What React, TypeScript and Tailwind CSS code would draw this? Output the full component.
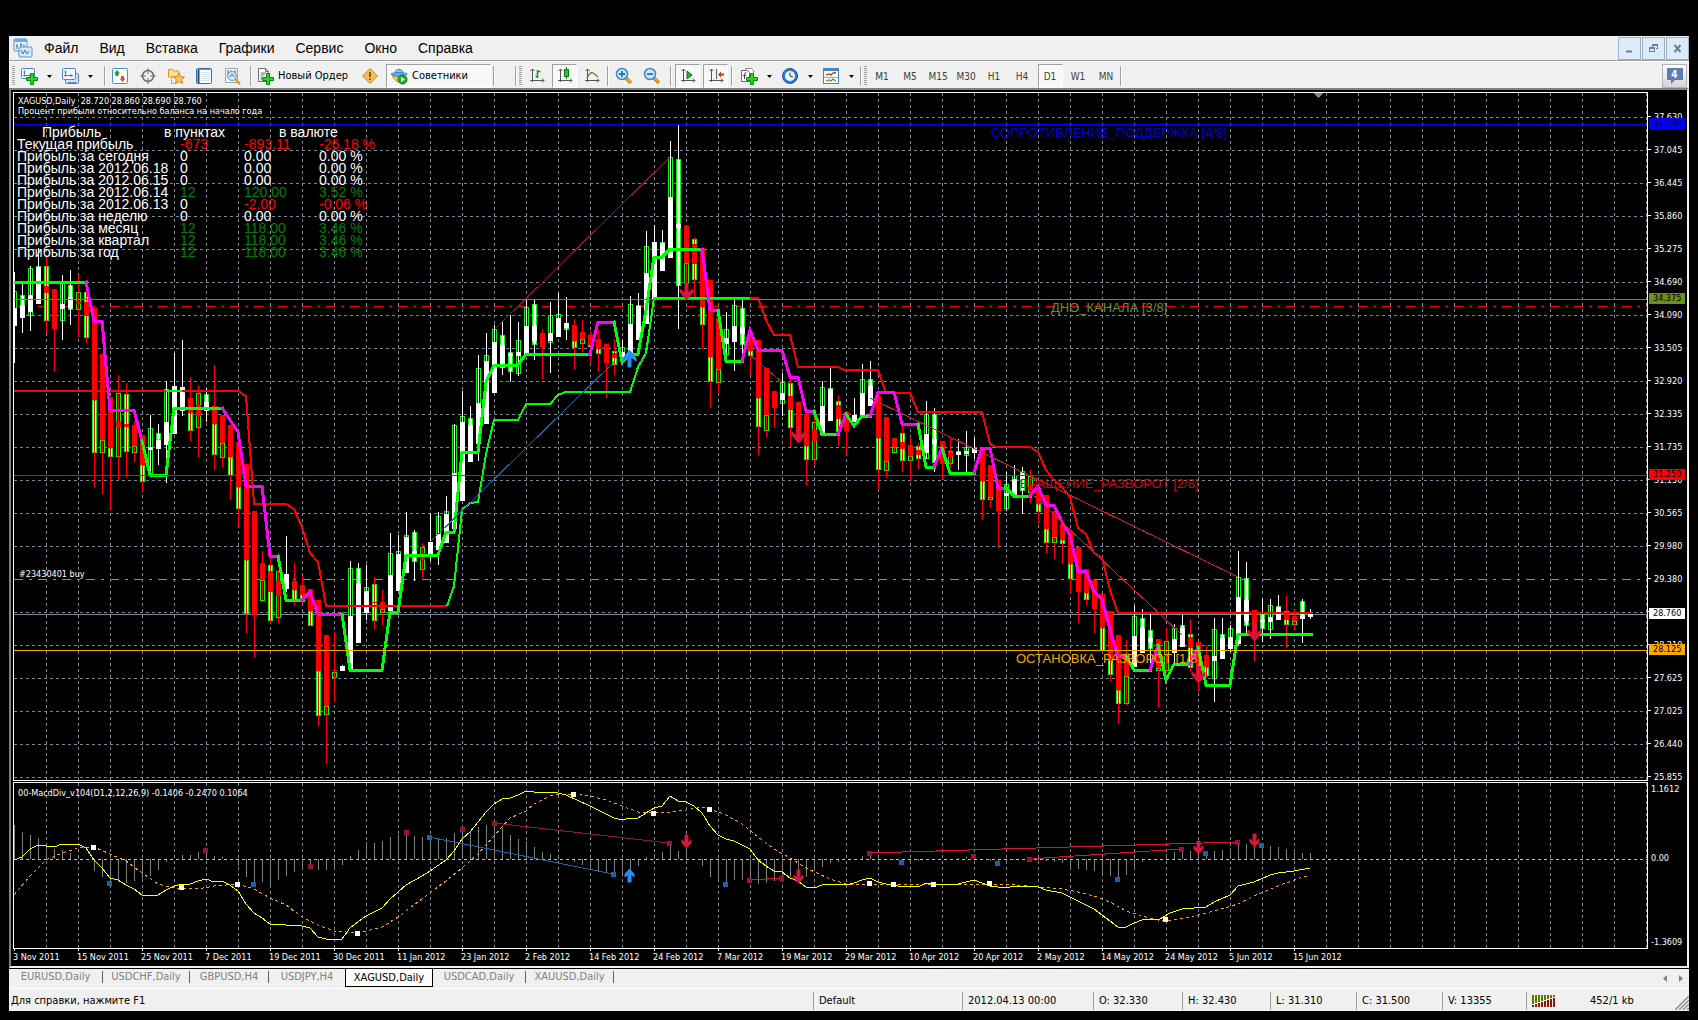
import React from "react";

type Point = [number, number];
// high, low, body top, body bottom, rising, outline top, outline bottom, outline filled
type Bar = [number, number, number, number, 0 | 1, number?, number?, (0 | 1)?];

const STEP = 8;
const FIRST_X = 14;

const BARS: Array<Bar> = [
  [272, 363, 308, 326, 1, 291, 308, 0], [283, 333, 305, 318, 1, 295, 305, 1],
  [266, 331, 295, 312, 1, 268, 315, 0], [248, 304, 267, 304, 1, 266, 267, 0],
  [258, 333, 286, 293, 0, 266, 320, 1], [289, 371, 289, 329, 0],
  [275, 340, 304, 309, 1, 283, 320, 0], [270, 325, 297, 308, 1, 285, 309, 1],
  [276, 337, 302, 304, 0, 292, 309, 0], [290, 343, 302, 316, 0, 292, 337, 1],
  [308, 487, 308, 400, 0, 400, 452, 1], [354, 494, 354, 440, 0, 440, 452, 0],
  [397, 509, 397, 448, 0, 448, 456, 1], [375, 480, 422, 427, 0, 393, 456, 0],
  [383, 477, 424, 427, 0, 394, 451, 1], [421, 462, 425, 446, 0, 446, 452, 0],
  [435, 492, 435, 465, 0, 465, 481, 1], [415, 473, 447, 450, 1, 428, 473, 0],
  [424, 465, 440, 449, 1, 433, 439, 1], [381, 483, 422, 445, 1, 389, 422, 0],
  [353, 434, 386, 434, 1], [340, 416, 387, 411, 1],
  [377, 441, 398, 413, 0, 413, 430, 1], [385, 457, 405, 416, 0, 393, 427, 0],
  [388, 422, 402, 411, 1, 394, 402, 1], [365, 470, 406, 424, 0, 424, 454, 1],
  [415, 467, 415, 443, 0, 443, 457, 0], [425, 500, 425, 457, 0, 457, 475, 1],
  [442, 527, 442, 487, 0, 487, 508, 1], [464, 633, 464, 560, 0, 560, 613, 1],
  [511, 657, 511, 615, 0], [551, 600, 563, 580, 0, 580, 600, 0],
  [558, 624, 571, 592, 0, 565, 620, 1], [570, 624, 581, 596, 0, 571, 617, 0],
  [536, 592, 574, 589, 1], [563, 605, 581, 590, 0, 590, 600, 1],
  [576, 603, 585, 595, 0, 595, 601, 1], [589, 626, 589, 611, 0, 611, 625, 1],
  [600, 726, 600, 671, 0, 671, 715, 1], [635, 764, 635, 706, 0, 706, 714, 0],
  [632, 702, 670, 671, 0, 672, 677, 0], [665, 671, 666, 671, 1],
  [561, 670, 616, 670, 1, 568, 616, 0], [563, 643, 583, 643, 1, 568, 583, 1],
  [565, 620, 591, 613, 1, 587, 591, 0], [577, 629, 602, 603, 0, 584, 620, 1],
  [590, 625, 602, 609, 0, 609, 612, 0], [533, 612, 575, 611, 1, 553, 575, 0],
  [535, 591, 554, 591, 1, 551, 554, 0], [512, 573, 537, 573, 1, 535, 537, 0],
  [530, 581, 551, 556, 1, 532, 561, 1], [543, 578, 553, 560, 0, 547, 569, 0],
  [513, 561, 542, 555, 1], [512, 565, 534, 550, 1, 516, 534, 0],
  [496, 543, 514, 543, 1, 511, 514, 0], [424, 529, 473, 529, 1, 425, 473, 0],
  [391, 501, 422, 501, 1, 416, 422, 0], [406, 462, 425, 462, 1, 418, 425, 1],
  [355, 461, 403, 444, 1, 368, 403, 0], [333, 424, 361, 424, 1, 355, 361, 0],
  [325, 393, 342, 393, 1, 329, 342, 0], [322, 375, 345, 368, 1, 335, 345, 1],
  [315, 382, 354, 356, 1, 352, 371, 1], [322, 376, 352, 356, 1, 340, 373, 0],
  [300, 355, 326, 355, 1, 307, 326, 0], [299, 360, 326, 341, 1, 304, 344, 1],
  [329, 379, 333, 348, 0], [302, 373, 333, 341, 1, 315, 342, 0],
  [293, 337, 318, 337, 1, 314, 318, 0], [297, 340, 323, 328, 1, 328, 329, 0],
  [319, 369, 325, 341, 0, 341, 347, 1], [320, 352, 332, 339, 0, 339, 343, 0],
  [331, 364, 335, 345, 0, 345, 346, 0], [330, 372, 339, 349, 0, 349, 353, 1],
  [344, 398, 344, 363, 0], [339, 375, 353, 358, 0, 351, 364, 1],
  [340, 360, 352, 358, 1, 347, 358, 0], [296, 358, 324, 358, 1, 304, 324, 0],
  [293, 340, 306, 340, 1, 305, 306, 0], [231, 324, 273, 324, 1, 246, 273, 0],
  [225, 300, 242, 300, 1], [230, 271, 243, 271, 1, 242, 243, 0],
  [141, 258, 197, 258, 1, 157, 197, 0], [125, 329, 224, 228, 1, 159, 285, 1],
  [226, 283, 226, 263, 0, 263, 283, 0], [237, 298, 244, 264, 0, 239, 279, 1],
  [248, 349, 248, 307, 0, 307, 324, 1], [280, 408, 280, 357, 0, 357, 381, 1],
  [318, 394, 318, 369, 0, 369, 382, 0], [312, 354, 338, 344, 1, 329, 354, 0],
  [300, 371, 326, 342, 1, 305, 326, 0], [299, 354, 327, 334, 1, 308, 344, 1],
  [333, 375, 333, 351, 0, 351, 355, 1], [340, 455, 340, 398, 0, 398, 426, 1],
  [368, 437, 368, 415, 0, 415, 430, 0], [391, 427, 391, 408, 0],
  [373, 416, 393, 400, 1, 382, 403, 0], [378, 447, 396, 410, 0, 383, 427, 1],
  [402, 435, 402, 435, 0], [414, 485, 414, 446, 0, 446, 459, 1],
  [416, 466, 430, 441, 0, 422, 459, 0], [381, 435, 406, 435, 1, 387, 406, 0],
  [368, 421, 389, 421, 1, 388, 389, 0], [395, 446, 405, 419, 0, 401, 431, 1],
  [412, 455, 412, 431, 0], [398, 422, 415, 422, 1],
  [364, 418, 393, 416, 1, 379, 393, 0], [361, 406, 386, 406, 1, 379, 386, 1],
  [396, 490, 396, 438, 0, 438, 469, 1], [417, 478, 417, 461, 0, 461, 470, 0],
  [438, 452, 438, 447, 0, 447, 452, 0], [425, 472, 442, 449, 0, 433, 460, 1],
  [437, 481, 445, 456, 0, 456, 460, 0], [443, 469, 450, 455, 0, 446, 458, 1],
  [401, 459, 434, 453, 1, 414, 458, 0], [408, 472, 439, 444, 1, 414, 462, 1],
  [441, 479, 441, 464, 0], [437, 468, 452, 457, 0, 451, 463, 0],
  [439, 470, 452, 455, 1, 451, 452, 0], [431, 472, 451, 454, 1, 447, 455, 0],
  [438, 459, 448, 453, 1], [450, 519, 450, 481, 0, 481, 499, 1],
  [465, 508, 465, 497, 0, 497, 499, 0], [480, 548, 480, 511, 0],
  [472, 511, 493, 496, 1, 484, 508, 0], [465, 495, 479, 495, 1, 475, 479, 0],
  [467, 514, 474, 480, 1, 471, 490, 1], [470, 503, 486, 490, 0, 476, 492, 0],
  [490, 524, 490, 504, 0, 504, 511, 1], [495, 553, 495, 529, 0, 529, 542, 1],
  [511, 559, 511, 537, 0, 537, 542, 0], [524, 564, 524, 540, 0, 540, 543, 1],
  [531, 594, 531, 564, 0, 564, 578, 1], [547, 623, 547, 592, 0],
  [569, 605, 569, 593, 0, 593, 599, 1], [580, 633, 580, 609, 0],
  [594, 652, 594, 628, 0, 628, 650, 1], [611, 681, 611, 660, 0, 660, 674, 1],
  [635, 724, 635, 690, 0, 690, 703, 1], [640, 705, 653, 676, 0, 676, 703, 0],
  [606, 667, 636, 667, 1, 616, 636, 0], [609, 653, 628, 653, 1, 618, 628, 1],
  [614, 665, 638, 642, 1, 630, 648, 1], [639, 708, 639, 668, 0, 668, 670, 0],
  [627, 673, 654, 656, 0, 641, 670, 0], [624, 665, 639, 653, 1, 628, 639, 0],
  [615, 647, 628, 647, 1, 625, 628, 1], [619, 672, 637, 648, 0, 634, 667, 1],
  [642, 692, 642, 675, 0], [645, 678, 655, 667, 0, 667, 675, 1],
  [618, 702, 656, 661, 1, 629, 678, 0], [618, 659, 638, 659, 1, 634, 638, 1],
  [625, 652, 637, 649, 1, 628, 637, 0], [551, 645, 597, 644, 1, 577, 597, 0],
  [562, 633, 600, 621, 1, 578, 625, 1], [610, 661, 610, 637, 0],
  [599, 642, 620, 622, 1, 614, 628, 1], [599, 639, 617, 622, 1, 605, 629, 0],
  [595, 620, 607, 620, 1, 606, 607, 0], [596, 648, 612, 620, 0, 611, 624, 1],
  [610, 629, 616, 621, 0, 621, 624, 0], [599, 643, 615, 619, 1, 601, 615, 1],
  [609, 619, 614, 617, 1],
];

// signed bar heights, one per candle
const HISTOGRAM = [
  34, 27, 24, 21, 14, 10, 9, 6, 2, 0, -12, -18, -24, -21, -24, -22, -22, -17, -11, -3, 0, 4, 4, 7,
  9, 3, 2, -1, -7, -18, -24, -23, -27, -21, -17, -13, -9, -7, -11, -11, -10, -6, 3, 9, 17, 16, 18,
  22, 24, 26, 23, 22, 21, 21, 21, 26, 29, 28, 32, 34, 35, 31, 24, 20, 18, 12, 7, 5, 1, 0, -3, -6,
  -10, -12, -13, -13, -15, -11, -7, 2, 5, 7, 14, 8, 11, 0, -7, -18, -22, -25, -21, -21, -23, -25,
  -24, -22, -20, -18, -22, -18, -12, -8, -4, -3, 0, 0, 3, 4, 1, 0, -1, -2, -3, -2, -1, 0, 0, 0, 1,
  2, 2, 0, -2, -4, -2, -1, 0, 0, -1, -2, -3, -4, -9, -10, -11, -12, -15, -17, -19, -16, -9, -3, 0,
  0, 5, 7, 8, 8, 7, 8, 8, 9, 11, 16, 15, 14, 13, 13, 12, 10, 9, 6, 6,
];

const TRAIL: Array<{ color: string; points: string }> = [
  { color: "#00ff00", points: "14,282 86,282" },
  { color: "#ff00ff", points: "86,282 94,321 102,321 110,410 134,410 142,441" },
  { color: "#00ff00", points: "142,441 150,475 166,475 174,408 222,408" },
  { color: "#ff00ff", points: "222,408 230,420 238,432 246,486 262,486 270,556 278,556" },
  { color: "#00ff00", points: "278,556 286,600 302,600" },
  { color: "#ff00ff", points: "302,600 310,592 318,614 342,614" },
  {
    color: "#00ff00",
    points:
      "342,614 350,670 382,670 390,612 398,612 406,555 438,555 446,532 454,532 462,452 478,452 486,382 494,365 518,365 526,354 590,354",
  },
  { color: "#ff00ff", points: "590,354 598,322 614,322" },
  {
    color: "#00ff00",
    points: "614,322 622,362 630,354 638,354 646,310 654,257 662,257 670,249 702,249",
  },
  { color: "#ff00ff", points: "702,249 710,310 718,310" },
  { color: "#00ff00", points: "718,310 726,361 742,361" },
  {
    color: "#ff00ff",
    points: "742,361 750,330 758,350 782,350 790,377 798,377 806,411 814,411",
  },
  { color: "#00ff00", points: "814,411 822,434 838,434" },
  { color: "#ff00ff", points: "838,434 846,414" },
  { color: "#00ff00", points: "846,414 854,426 862,416 870,416" },
  { color: "#ff00ff", points: "870,416 878,392 894,392 902,424 918,424" },
  { color: "#00ff00", points: "918,424 926,467 934,467" },
  { color: "#ff00ff", points: "934,467 942,448" },
  { color: "#00ff00", points: "942,448 950,473 974,473" },
  { color: "#ff00ff", points: "974,473 982,448 990,448 998,488 1006,488" },
  { color: "#00ff00", points: "1006,488 1014,496 1030,496" },
  {
    color: "#ff00ff",
    points:
      "1030,496 1038,486 1046,505 1054,505 1062,522 1070,535 1078,571 1086,571 1094,592 1102,599 1110,630 1118,656 1126,656",
  },
  { color: "#00ff00", points: "1126,656 1134,670 1150,670" },
  { color: "#ff00ff", points: "1150,670 1158,645" },
  { color: "#00ff00", points: "1158,645 1166,680 1174,664 1190,664" },
  { color: "#ff00ff", points: "1190,664 1198,647" },
  { color: "#00ff00", points: "1198,647 1206,685 1230,685 1238,634 1311,634" },
];

const CHANNEL: Array<{ color: string; points: string }> = [
  {
    color: "#ff0000",
    points:
      "14,391 238,391 246,396 254,504 286,504 294,509 302,527 310,553 318,562 326,606 447,606",
  },
  { color: "#00ff00", points: "166,391 182,391" },
  {
    color: "#00ff00",
    points:
      "447,606 454,586 462,510 470,503 478,502 486,454 494,420 518,420 526,404 550,404 558,395 566,392 630,392 638,367 646,353 654,298 750,298",
  },
  {
    color: "#ff0000",
    points:
      "750,298 758,298 766,320 774,335 790,335 798,367 838,367 844,370 878,370 886,393 910,393 918,412 982,412 990,444 996,447 1030,447 1038,452 1046,470 1054,480 1062,487 1070,497 1078,528 1086,534 1094,553 1102,558 1110,590 1118,613 1311,613",
  },
];

const MACD_LINE =
  "14,860 22,857 30,849 38,845 46,846 54,847 62,844 70,845 78,844 86,848 94,860 102,868 110,878 118,880 126,885 134,889 142,895 158,895 166,890 174,886 182,884 190,884 198,881 206,879 214,882 222,881 230,885 238,891 246,904 254,913 262,918 270,924 286,925 302,926 310,928 318,937 326,939 334,940 342,939 350,928 358,922 366,916 382,908 390,899 406,885 422,876 430,871 446,860 454,851 462,839 470,832 478,822 486,812 494,804 502,799 510,798 518,795 526,791 534,792 558,793 566,795 590,806 606,814 614,818 622,820 630,818 638,818 646,813 654,808 662,806 670,796 678,801 686,802 694,806 702,813 710,826 718,835 726,839 734,841 742,845 750,849 758,860 766,866 774,871 782,872 790,878 798,881 806,887 814,888 822,885 830,884 846,885 854,883 862,880 870,878 878,882 886,884 894,885 902,887 910,886 918,887 926,883 934,884 958,884 966,882 974,880 982,883 990,886 1006,888 1014,886 1030,886 1038,887 1046,890 1062,893 1078,901 1094,909 1110,921 1118,927 1126,927 1134,923 1142,920 1160,919 1170,913 1182,909 1206,907 1214,902 1230,895 1238,886 1254,882 1270,875 1278,873 1294,871 1310,868";

const SIGNAL_LINE =
  "14,895 30,876 46,860 62,853 78,848 94,847 110,854 126,861 142,873 158,884 174,888 198,889 214,886 238,884 254,889 270,898 286,905 302,917 318,925 334,931 358,933 366,931 382,927 398,917 414,905 430,893 446,881 462,868 478,854 494,836 510,818 526,811 534,804 550,796 558,794 574,794 590,796 606,800 622,806 638,812 654,813 670,812 686,810 702,807 710,809 726,815 742,824 758,837 774,849 790,858 806,868 830,879 846,884 870,884 910,885 1000,884 1030,886 1062,889 1078,892 1094,896 1110,902 1126,911 1142,916 1158,920 1174,920 1190,917 1214,911 1238,904 1254,896 1278,886 1294,880 1310,875";

const MARKS: Array<{ color: string; points: Array<Point> }> = [
  {
    color: "#ffffff",
    points: [
      [93, 847], [181, 887], [237, 884], [357, 933], [573, 794], [653, 813], [709, 809],
      [869, 883], [893, 884], [933, 884], [989, 883], [1165, 919],
    ],
  },
  {
    color: "#1565b4",
    points: [
      [109, 883], [253, 884], [429, 837], [613, 874], [725, 884], [901, 862], [997, 863],
      [1117, 879], [1205, 853], [1261, 845],
    ],
  },
  {
    color: "#9a1232",
    points: [
      [205, 850], [310, 866], [406, 832], [462, 829], [494, 823], [669, 843], [749, 880],
      [781, 878], [869, 853], [973, 856], [1029, 859], [1181, 849], [1237, 842],
    ],
  },
];

const PRICES = [
  "37.630", "37.045", "36.445", "35.860", "35.275", "34.690", "34.090", "33.505", "32.920",
  "32.335", "31.735", "31.150", "30.565", "29.980", "29.380", "28.795", "28.210", "27.625",
  "27.025", "26.440", "25.855",
];

const DATES = [
  "3 Nov 2011", "15 Nov 2011", "25 Nov 2011", "7 Dec 2011", "19 Dec 2011", "30 Dec 2011",
  "11 Jan 2012", "23 Jan 2012", "2 Feb 2012", "14 Feb 2012", "24 Feb 2012", "7 Mar 2012",
  "19 Mar 2012", "29 Mar 2012", "10 Apr 2012", "20 Apr 2012", "2 May 2012", "14 May 2012",
  "24 May 2012", "5 Jun 2012", "15 Jun 2012",
];

const PROFITS: Array<{ label: string; values: [string, string, string]; colors: [string, string, string] }> = [
  { label: "Текущая прибыль", values: ["-673", "-893.11", "-26.18 %"], colors: ["text-[#ff0000]", "text-[#ff0000]", "text-[#ff0000]"] },
  { label: "Прибыль за сегодня", values: ["0", "0.00", "0.00 %"], colors: ["text-white", "text-white", "text-white"] },
  { label: "Прибыль за 2012.06.18", values: ["0", "0.00", "0.00 %"], colors: ["text-white", "text-white", "text-white"] },
  { label: "Прибыль за 2012.06.15", values: ["0", "0.00", "0.00 %"], colors: ["text-white", "text-white", "text-white"] },
  { label: "Прибыль за 2012.06.14", values: ["12", "120.00", "3.52 %"], colors: ["text-[#008000]", "text-[#008000]", "text-[#008000]"] },
  { label: "Прибыль за 2012.06.13", values: ["0", "-2.00", "-0.06 %"], colors: ["text-white", "text-[#ff0000]", "text-[#ff0000]"] },
  { label: "Прибыль за неделю", values: ["0", "0.00", "0.00 %"], colors: ["text-white", "text-white", "text-white"] },
  { label: "Прибыль за месяц", values: ["12", "118.00", "3.46 %"], colors: ["text-[#008000]", "text-[#008000]", "text-[#008000]"] },
  { label: "Прибыль за квартал", values: ["12", "118.00", "3.46 %"], colors: ["text-[#008000]", "text-[#008000]", "text-[#008000]"] },
  { label: "Прибыль за год", values: ["12", "118.00", "3.46 %"], colors: ["text-[#008000]", "text-[#008000]", "text-[#008000]"] },
];

const MENU = ["Файл", "Вид", "Вставка", "Графики", "Сервис", "Окно", "Справка"];
const TIMEFRAMES = ["M1", "M5", "M15", "M30", "H1", "H4", "D1", "W1", "MN"];

const UI_FONT = "font-['DejaVu_Sans_Condensed','Noto_Sans',sans-serif]";

/* ---------- toolbar icons ---------- */

type IconProps = { size?: number; children: React.ReactNode };

const Icon: React.FC<IconProps> = ({ size = 18, children }) => (
  <svg width={size} height={size} viewBox="0 0 18 18" fill="none" className="shrink-0" aria-hidden="true">
    {children}
  </svg>
);

const Plus = () => (
  <path d="M10.5 6.5h3v4h4v3h-4v4h-3v-4h-4v-3h4z" fill="#2bd42b" stroke="#0a8a0a" />
);

const Axes = () => (
  <path d="M4.500 2v13M2 13.500h14M2.500 4l2-2 2 2M14 11.500l2 2-2 2" stroke="#555" />
);

const Lens = () => (
  <>
    <path d="M11 11l5 5" stroke="#c98a1c" strokeWidth="3.500" />
    <path d="M11 10.500l5 5" stroke="#f5cf62" />
    <circle cx="7" cy="7" r="5.500" fill="#c9e6fa" stroke="#3f87c9" strokeWidth="1.500" />
  </>
);

const AppIcon = () => (
  <svg width="20" height="20" viewBox="0 0 20 20" fill="none" aria-hidden="true">
    <rect x="1" y="1" width="13" height="12" rx="1" fill="#eaf4fd" stroke="#5b93cf" />
    <rect x="1" y="1" width="13" height="3" fill="#6fa8dc" />
    <path d="M4 6v5M3 8h2M8 5v6M7 7h2M11 6v4" stroke="#3f78b8" />
    <rect x="6" y="9" width="13" height="10" rx="1" fill="#d5e9fa" stroke="#5b93cf" />
    <path d="M8 12l2 4 2-4 2 4 2-3" stroke="#3f78b8" />
  </svg>
);

const NewChartIcon = () => (
  <Icon>
    <rect x="1.500" y="1.500" width="13" height="10" rx="1" fill="#f2f8fe" stroke="#4a86c5" />
    <path d="M4.500 3.500v6M3 8.500h8M3.500 5h2M10 7v3" stroke="#5b7fa6" />
    <Plus />
  </Icon>
);

const ProfilesIcon = () => (
  <Icon>
    <rect x="4.500" y="6.500" width="13" height="10" rx="1" fill="#cfe3f7" stroke="#4a86c5" />
    <rect x="1.500" y="1.500" width="13" height="11" rx="1" fill="#f2f8fe" stroke="#4a86c5" />
    <path d="M4.500 3.500v6M3 8.500h9M3.500 5h2M10 7v3M7 15.500h8" stroke="#5b7fa6" />
  </Icon>
);

const MarketWatchIcon = () => (
  <Icon>
    <rect x="1.500" y="1.500" width="15" height="15" rx="1" fill="#fbfdff" stroke="#4f8dcc" />
    <path d="M6 3l3 3.500H7.500V9h-3V6.500H3z" fill="#17a317" />
    <path d="M11.500 15l-3-3.500H10V9h3v2.500h1.500z" fill="#e2502a" />
  </Icon>
);

const DataWindowIcon = () => (
  <Icon>
    <circle cx="9" cy="9" r="5.500" stroke="#6a6a6a" strokeWidth="1.500" />
    <path d="M9 1v6M9 11v6M1 9h6M11 9h6" stroke="#6a6a6a" />
  </Icon>
);

const NavigatorIcon = () => (
  <Icon>
    <path d="M1.500 10V2.500h4l1 1.500h5v6z" fill="#ffe08a" stroke="#d19a1d" />
    <path d="M4.500 11v6M4.500 16.500h3" stroke="#777" strokeDasharray="1 1" />
    <path d="M12 6l1.700 3.600 3.800.4-2.800 2.600.8 3.900-3.500-2-3.500 2 .8-3.900L6.500 10l3.800-.4z" fill="#ffc65c" stroke="#c9852a" />
  </Icon>
);

const TerminalIcon = () => (
  <Icon>
    <rect x="1.500" y="1.500" width="15" height="15" rx="1" fill="#fff" stroke="#2e6cb4" />
    <path d="M2 2.500h14" stroke="#5f9bd8" />
    <path d="M3.500 3v13" stroke="#23456e" strokeWidth="2" />
    <path d="M6 5.500h9M6 7.500h9M6 9.500h9M6 11.500h9M6 13.500h9" stroke="#d8e2ee" />
  </Icon>
);

const TesterIcon = () => (
  <Icon>
    <path d="M2.500 1.500h12v14h-12z" fill="#f6f6f6" stroke="#a5a5a5" />
    <path d="M5 3v8M8 3v3M12 3v9M4 5h2M11 5h2" stroke="#777" />
    <path d="M12 12l5 5" stroke="#dca02a" strokeWidth="2.500" />
    <circle cx="9" cy="9" r="4.500" fill="#cfe6fa" fillOpacity="0.800" stroke="#5a9bd6" />
    <path d="M7 10l2-3 2 3" stroke="#3d6fa5" />
  </Icon>
);

const DocPlusIcon = () => (
  <Icon>
    <path d="M2.500 1.500h7l3 3v10h-10z" fill="#fff" stroke="#6d6d6d" />
    <path d="M9.500 1.500v3h3M4.500 6h6M4.500 8h4M4.500 10h2M4.500 12h2" stroke="#6d6d6d" />
    <Plus />
  </Icon>
);

const IndicatorIcon = () => (
  <Icon>
    <path d="M5.500 1.500h6l2 2v9h-8z" fill="#fff" stroke="#8a8a8a" />
    <path d="M1.500 3.500h6l2 2v9h-8z" fill="#fff" stroke="#6d6d6d" />
    <path d="M6.500 6c-2-1-2 1-2 2v4M3 8.500h3" stroke="#444" />
    <Plus />
  </Icon>
);

const WarningIcon = () => (
  <Icon>
    <path d="M9 1.500L16.500 9 9 16.500 1.500 9z" fill="#f7bd52" stroke="#c98a2c" strokeLinejoin="round" />
    <path d="M9 5v5M9 11.500v1.500" stroke="#5a3d10" strokeWidth="1.500" />
  </Icon>
);

const ExpertsIcon = () => (
  <Icon>
    <path d="M2 9l5 6 6-1 2-6z" fill="#f0cb55" stroke="#c79a25" />
    <path d="M5 6c0-5 8-5 8 0" fill="#8ec4f0" stroke="#3a82c4" />
    <path d="M1 7c3-2 13-2 16 0-3 3-13 3-16 0z" fill="#66aee6" stroke="#3a82c4" />
    <circle cx="12.500" cy="12.500" r="4.500" fill="#1eae2b" stroke="#0d7d18" />
    <path d="M11 10l4 2.500-4 2.500z" fill="#fff" />
  </Icon>
);

const BarsIcon = () => (
  <Icon>
    <Axes />
    <path d="M7.500 9.500h2M9.500 3v8M9.500 4.500h3" stroke="#11921a" strokeWidth="1.500" />
  </Icon>
);

const CandlesIcon = () => (
  <Icon>
    <Axes />
    <path d="M10.500 0v12" stroke="#0b7d12" />
    <rect x="8.500" y="2.500" width="4" height="7" fill="#22c52d" stroke="#0b7d12" />
  </Icon>
);

const LineIcon = () => (
  <Icon>
    <Axes />
    <path d="M4 11c2-4 4-6 6-5s3 2 5 4" stroke="#3f8f2a" strokeWidth="1.300" />
  </Icon>
);

const ZoomInIcon = () => (
  <Icon>
    <Lens />
    <path d="M7 4v6M4 7h6" stroke="#2f6fae" strokeWidth="1.800" />
  </Icon>
);

const ZoomOutIcon = () => (
  <Icon>
    <Lens />
    <path d="M4 7h6" stroke="#2f6fae" strokeWidth="1.800" />
  </Icon>
);

const AutoScrollIcon = () => (
  <Icon>
    <Axes />
    <path d="M8 4l5 4-5 4z" fill="#27b12f" stroke="#0b7d12" />
  </Icon>
);

const ShiftIcon = () => (
  <Icon>
    <Axes />
    <path d="M9.500 2v10" stroke="#356a8a" />
    <path d="M11 7.500l3-3v2h3v2h-3v2z" fill="#c0391b" />
  </Icon>
);

const ClockIcon = () => (
  <Icon>
    <circle cx="9" cy="9" r="7.500" fill="#2f7fd6" stroke="#14509c" />
    <circle cx="9" cy="9" r="5" fill="#f3f8ff" />
    <path d="M9 5.500V9l3 1" stroke="#333" />
  </Icon>
);

const TemplateIcon = () => (
  <Icon>
    <rect x="1.500" y="1.500" width="15" height="15" fill="#fdfdfd" stroke="#4787c9" />
    <path d="M2 3h14" stroke="#4787c9" strokeWidth="2" />
    <path d="M2 10.500h14" stroke="#8aaed2" />
    <path d="M4 8l3-1 2 1 2-2 3-.5" stroke="#9c3a1a" strokeWidth="1.300" />
    <path d="M4 14l3-1 2 1 2-2 3 2" stroke="#4b9a35" strokeWidth="1.300" />
  </Icon>
);

/* ---------- toolbar parts ---------- */

const Separator = () => <span className="h-5 w-0.5 shrink-0 border-r border-white bg-[#a0a0a0]" />;

const Grip = () => (
  <svg width="3" height="20" className="shrink-0" aria-hidden="true">
    <path d="M1.500 0v20" stroke="#a0a0a0" strokeWidth="3" strokeDasharray="1 1" />
  </svg>
);

type ToolButtonProps = { label: string; width?: string; active?: boolean; children: React.ReactNode };

const ToolButton: React.FC<ToolButtonProps> = ({ label, width = "w-7", active, children }) => (
  <button
    type="button"
    aria-label={label}
    aria-pressed={active}
    className={`${width} flex h-6 shrink-0 items-center justify-center ${
      active ? "border border-t-[#a0a0a0] border-r-white border-b-white border-l-[#a0a0a0] bg-[#f8f8f8]" : ""
    }`}
  >
    {children}
  </button>
);

const DropButton: React.FC<{ label: string }> = ({ label }) => (
  <button type="button" aria-label={label} className="flex h-6 w-[13px] shrink-0 items-center justify-center">
    <svg width="5" height="3" viewBox="0 0 5 3" aria-hidden="true">
      <path d="M0 0h5L2.500 3z" fill="#000" />
    </svg>
  </button>
);

const MenuBar = () => (
  <header className="flex h-[25px] items-center justify-between border-b border-[#a0a0a0] bg-[#f0f0f0] pl-1">
    <nav className="flex items-center gap-px font-['Liberation_Sans',Arial,sans-serif] text-[14px]">
      <AppIcon />
      {MENU.map((item) => (
        <button key={item} type="button" className="px-[10px]">
          {item}
        </button>
      ))}
    </nav>
    <div className="flex gap-px">
      {["Свернуть", "Восстановить", "Закрыть"].map((label, index) => (
        <button
          key={label}
          type="button"
          aria-label={label}
          className="flex h-[23px] w-[23px] items-center justify-center border border-[#9fb0c4] bg-[#dcebf9]"
        >
          <svg width="9" height="9" viewBox="0 0 9 9" fill="none" stroke="#6e8096" aria-hidden="true">
            {index === 0 && <path d="M1 7.500h6" strokeWidth="2" />}
            {index === 1 && (
              <path d="M3.500 3V.500h5v4H7M.500 3.500h5v4h-5zM.500 4.500h5M3.500 1.500h5" shapeRendering="crispEdges" />
            )}
            {index === 2 && <path d="M1.500 1l6 7M7.500 1l-6 7" strokeWidth="2" />}
          </svg>
        </button>
      ))}
    </div>
  </header>
);

const Toolbar = () => (
  <div className={`${UI_FONT} flex h-[27px] items-center justify-between border-t border-white bg-[#f0f0f0] pt-0.5 pr-0.5 pl-[3px] text-[11px]`}>
    <div className="flex items-center">
      <Grip />
      <div className="flex items-center pr-[7px]">
        <ToolButton label="Новый график"><NewChartIcon /></ToolButton>
        <DropButton label="Список графиков" />
        <ToolButton label="Профили"><ProfilesIcon /></ToolButton>
        <DropButton label="Список профилей" />
      </div>
      <Separator />
      <div className="flex items-center pr-1">
        <ToolButton label="Обзор рынка"><MarketWatchIcon /></ToolButton>
        <ToolButton label="Окно данных"><DataWindowIcon /></ToolButton>
        <ToolButton label="Навигатор"><NavigatorIcon /></ToolButton>
        <ToolButton label="Терминал"><TerminalIcon /></ToolButton>
        <ToolButton label="Тестер стратегий"><TesterIcon /></ToolButton>
      </div>
      <Separator />
      <button type="button" className="flex h-6 w-[104px] items-center gap-1 pl-1 whitespace-nowrap">
        <DocPlusIcon />
        Новый Ордер
      </button>
      <ToolButton label="Редактор"><WarningIcon /></ToolButton>
      <button
        type="button"
        aria-pressed="true"
        className="mr-0.5 ml-0.5 flex h-6 w-[105px] items-center gap-1 border border-t-[#a0a0a0] border-r-white border-b-white border-l-[#a0a0a0] bg-[#f8f8f8] pl-[3px]"
      >
        <ExpertsIcon />
        Советники
      </button>
      <Separator />
      <span className="w-5" />
      <Separator />
      <span className="w-0.5" />
      <Grip />
      <div className="flex items-center gap-px pr-px pl-px">
        <ToolButton label="Бары"><BarsIcon /></ToolButton>
        <ToolButton label="Свечи" width="w-[25px]" active><CandlesIcon /></ToolButton>
        <ToolButton label="Линия"><LineIcon /></ToolButton>
      </div>
      <Separator />
      <div className="flex items-center pr-1 pl-px">
        <ToolButton label="Увеличить"><ZoomInIcon /></ToolButton>
        <ToolButton label="Уменьшить"><ZoomOutIcon /></ToolButton>
      </div>
      <Separator />
      <div className="flex items-center gap-[3px] px-[3px]">
        <ToolButton label="Автопрокрутка" width="w-[25px]" active><AutoScrollIcon /></ToolButton>
        <ToolButton label="Сдвиг графика" width="w-[25px]" active><ShiftIcon /></ToolButton>
      </div>
      <Separator />
      <div className="flex items-center pr-0.5 pl-0.5">
        <ToolButton label="Индикаторы"><IndicatorIcon /></ToolButton>
        <DropButton label="Список индикаторов" />
        <ToolButton label="Периоды"><ClockIcon /></ToolButton>
        <DropButton label="Список периодов" />
        <ToolButton label="Шаблоны"><TemplateIcon /></ToolButton>
        <DropButton label="Список шаблонов" />
      </div>
      <Separator />
      <span className="w-0.5" />
      <Grip />
      <div className="flex items-center pl-px text-[10px] text-[#404040]">
        {TIMEFRAMES.map((frame) => (
          <span key={frame} className="flex w-7 justify-center">
            <ToolButton label={frame} width="w-[25px]" active={frame === "D1"}>
              {frame}
            </ToolButton>
          </span>
        ))}
      </div>
      <Separator />
    </div>
    <button
      type="button"
      aria-label="Сообщения: 4"
      className="flex h-6 w-[25px] items-center justify-center border border-[#b4b4b4] bg-linear-to-b from-white to-[#d4d4d4]"
    >
      <span className="relative mb-1 flex h-3 w-4 items-center justify-center bg-[#5b7db1] text-[10px] font-bold text-white">
        4
        <span className="absolute top-3 left-1 border-t-4 border-r-4 border-t-[#5b7db1] border-r-transparent" />
      </span>
    </button>
  </div>
);

/* ---------- chart ---------- */

const Arrow: React.FC<{ x: number; y: number; up?: boolean; small?: boolean }> = ({ x, y, up, small }) => {
  // y is the tip of the arrow
  const d = small
    ? "M-1-13h3v8l3-3v3L.500 0-4-5v-3l3 3z"
    : "M-1-17h3v10l5-4v3L.500 0-6-8v-3l5 4z";
  return (
    <path
      d={d}
      transform={`translate(${x} ${y})${up ? " scale(1 -1)" : ""}`}
      fill={up ? "#1e90ff" : "#dc143c"}
      stroke={up ? "#1e90ff" : "#dc143c"}
      strokeWidth="1"
    />
  );
};

const Grid: React.FC<{ top: number; bottom: number; rows: Array<number> }> = ({ top, bottom, rows }) => (
  <g stroke="#778899" strokeDasharray="3 3">
    {Array.from({ length: 90 }, (_, i) => 46.5 + i * 32).map((x) => (
      <line key={x} x1={x} x2={x} y1={top} y2={bottom} />
    ))}
    {rows.map((y) => (
      <line key={y} x1="14" x2="3000" y1={y + 0.5} y2={y + 0.5} />
    ))}
  </g>
);

const Candle: React.FC<{ bar: Bar; x: number }> = ({ bar, x }) => {
  const [high, low, top, bottom, rising, boxTop, boxBottom, filled] = bar;
  const color = rising ? "#ffffff" : "#ff0000";
  return (
    <g>
      {boxTop !== undefined && boxBottom !== undefined && (
        <rect
          x={x - 1.5}
          y={boxTop + 0.5}
          width="4"
          height={Math.max(boxBottom - boxTop, 1)}
          fill={filled ? "#ffffff" : "#000000"}
          stroke="#00ff00"
        />
      )}
      <rect x={x} y={high} width="1" height={low - high} fill={color} />
      <rect x={x - 2} y={top} width="5" height={bottom - top} fill={color} />
    </g>
  );
};

const PriceChart = () => (
  <svg className="block h-[687px] w-full" shapeRendering="crispEdges" role="img" aria-label="XAGUSD,Daily">
    <g transform="translate(-14 -93)">
      <Grid top={93} bottom={780} rows={PRICES.map((_, i) => 117 + i * 33)} />
      <path d="M1314 93h9l-4.500 5z" fill="#778899" />
      <path d="M14 306.500H3000M14 579.500H3000" stroke="#000000" />
      <line x1="14" x2="3000" y1="306.500" y2="306.500" stroke="#ff0000" strokeDasharray="9 6 3 6" />
      <line x1="14" x2="3000" y1="579.500" y2="579.500" stroke="#32cd32" strokeDasharray="9 6 3 6" />
      <line x1="14" x2="3000" y1="614.500" y2="614.500" stroke="#778899" />
      {BARS.map((bar, i) => (
        <Candle key={i} bar={bar} x={FIRST_X + i * STEP} />
      ))}
      <g fill="none">
        {CHANNEL.map((line, i) => (
          <polyline key={i} points={line.points} stroke={line.color} strokeWidth="2" />
        ))}
        {TRAIL.map((line, i) => (
          <polyline key={i} points={line.points} stroke={line.color} strokeWidth="3" strokeLinecap="square" />
        ))}
        <path d="M496 328L670 157" stroke="#9a1232" />
        <path d="M430 542L614 362" stroke="#1565b4" />
        <path d="M750 355L782 382M870 398L1238 577M1030 492L1182 635" stroke="#dc143c" />
      </g>
      <line x1="14" x2="3000" y1="124.500" y2="124.500" stroke="#0000ff" />
      <line x1="14" x2="3000" y1="299.500" y2="299.500" stroke="#6b8e23" />
      <line x1="14" x2="3000" y1="475.500" y2="475.500" stroke="#ff0000" />
      <line x1="14" x2="3000" y1="650.500" y2="650.500" stroke="#ffa500" />
      <g shapeRendering="auto">
        <Arrow x={629} y={350} up />
        <Arrow x={686} y={300} />
        <Arrow x={798} y={443} />
        <Arrow x={1198} y={683} />
        <Arrow x={1254} y={641} />
      </g>
      <g className="font-['Liberation_Sans',Arial,sans-serif] text-[13px]">
        <text x="991" y="137" fill="#0000cd">СОПРОТИВЛЕНИЕ_ПОДДЕРЖКА [4/8]</text>
        <text x="1051" y="312" fill="#6b8e23">ДНО_КАНАЛА [3/8]</text>
        <text x="1020" y="488" fill="#dd0000">ВРАЩЕНИЕ_РАЗВОРОТ [2/8]</text>
        <text x="1016" y="663" fill="#ffa500">ОСТАНОВКА_РАЗВОРОТ [1/8]</text>
      </g>
    </g>
  </svg>
);

const MacdChart = () => (
  <svg className="block h-[165px] w-full" shapeRendering="crispEdges" role="img" aria-label="00-MacdDiv_v104">
    <g transform="translate(-14 -783)">
      <Grid top={783} bottom={948} rows={[]} />
      {HISTOGRAM.map((value, i) => (
        <rect
          key={i}
          x={FIRST_X + i * STEP}
          y={value > 0 ? 859 - value : 859}
          width="1"
          height={Math.abs(value)}
          fill="#808080"
        />
      ))}
      <line x1="14" x2="3000" y1="859.500" y2="859.500" stroke="#c0c0c0" strokeDasharray="3 3" />
      <g fill="none">
        <polyline points={SIGNAL_LINE} stroke="#ffa500" strokeDasharray="3 3" />
        <polyline points={MACD_LINE} stroke="#ffff00" />
        <path d="M494 823L669 843" stroke="#9a1232" />
        <path d="M429 837L613 874" stroke="#1565b4" />
        <path d="M749 880L781 878M869 853L1237 842M1029 859L1181 849" stroke="#dc143c" />
      </g>
      {MARKS.map((group) =>
        group.points.map(([x, y]) => (
          <rect key={`${x}_${y}`} x={x - 2} y={y - 2} width="5" height="5" fill={group.color} />
        ))
      )}
      <g shapeRendering="auto">
        <Arrow x={629} y={869} up small />
        <Arrow x={686} y={848} small />
        <Arrow x={798} y={883} small />
        <Arrow x={1198} y={854} small />
        <Arrow x={1254} y={847} small />
      </g>
    </g>
  </svg>
);

const ProfitTable = () => (
  <div className="absolute top-[33px] left-[3px] font-['Liberation_Sans',Arial,sans-serif] text-[14px] leading-3 whitespace-nowrap text-white">
    <table className="table-fixed border-collapse">
      <caption className="text-left">
        <span className="flex">
          <span className="w-[123px] pl-[25px]">Прибыль</span>
          <span className="ml-6 w-[115px]">в пунктах</span>
          <span>в валюте</span>
        </span>
      </caption>
      <tbody>
        {PROFITS.map((row) => (
          <tr key={row.label}>
            <th scope="row" className="w-[163px] p-0 text-left font-normal">{row.label}</th>
            <td className={`w-16 p-0 ${row.colors[0]}`}>{row.values[0]}</td>
            <td className={`w-[75px] p-0 ${row.colors[1]}`}>{row.values[1]}</td>
            <td className={`w-16 p-0 ${row.colors[2]}`}>{row.values[2]}</td>
          </tr>
        ))}
      </tbody>
    </table>
  </div>
);

const ChartWindow = () => (
  <main className={`${UI_FONT} border-t-2 border-r-2 border-b-2 border-l-2 border-t-[#808080] border-r-[#f0f0f0] border-b-[#f0f0f0] border-l-[#808080] bg-black pt-0.5 pl-0.5 text-[9px] leading-3 text-white`}>
    <div className="flex">
      <section className="relative min-w-0 flex-1 border border-white">
        <PriceChart />
        <div className="absolute top-[3px] left-1 text-[9px] leading-[10px] whitespace-pre">
          <p>{"XAGUSD,Daily  28.720 28.860 28.690 28.760"}</p>
          <p>Процент прибыли относительно баланса на начало года</p>
        </div>
        <ProfitTable />
        <p className="absolute top-[475px] left-[5px]">#23430401 buy</p>
      </section>
      <div className="relative -mb-3 w-[39px] pt-2">
        {PRICES.map((price) => (
          <div key={price} className="flex h-[33px] items-center">
            <span className="h-px w-[3px] bg-white" />
            <span className="pl-[3px]">{price}</span>
          </div>
        ))}
        <span className="absolute top-[26px] left-px h-[11px] w-9 bg-[#0000ff] pl-1 leading-[11px] text-black">37.500</span>
        <span className="absolute top-[201px] left-px h-[11px] w-9 bg-[#6b8e23] pl-1 leading-[11px] text-black">34.375</span>
        <span className="absolute top-[377px] left-px h-[11px] w-9 bg-[#ff0000] pl-1 leading-[11px] text-black">31.250</span>
        <span className="absolute top-[516px] left-px h-[11px] w-9 bg-white pl-1 leading-[11px] text-black">28.760</span>
        <span className="absolute top-[552px] left-px h-[11px] w-9 bg-[#ffa500] pl-1 leading-[11px] text-black">28.125</span>
      </div>
    </div>
    <div className="mt-px flex">
      <section className="relative min-w-0 flex-1 border border-white">
        <MacdChart />
        <p className="absolute top-1 left-1">00-MacdDiv_v104(D1,2,12,26,9) -0.1406 -0.2470 0.1064</p>
      </section>
      <div className="flex w-[39px] flex-col justify-between pt-px pb-px pl-[3px]">
        <span>1.1612</span>
        <span className="-mt-4">0.00</span>
        <span>-1.3609</span>
      </div>
    </div>
    <div className="flex h-[17px] overflow-hidden">
      {DATES.map((date) => (
        <div key={date} className="w-16 shrink-0 whitespace-nowrap">
          <span className="ml-px block h-0.5 w-px bg-white" />
          <span className="block">{date}</span>
        </div>
      ))}
    </div>
  </main>
);

const TABS = [
  { name: "EURUSD,Daily", width: "w-[94px]" },
  { name: "USDCHF,Daily", width: "w-[87px]" },
  { name: "GBPUSD,H4", width: "w-[79px]" },
  { name: "USDJPY,H4", width: "w-[76px]" },
  { name: "XAGUSD,Daily", width: "w-[88px]" },
  { name: "USDCAD,Daily", width: "w-[93px]" },
  { name: "XAUUSD,Daily", width: "w-[88px]" },
];

const ChartTabs = () => (
  <nav className={`${UI_FONT} mt-px flex h-5 items-start justify-between border-b border-white bg-[#f0f0f0] text-[11px] text-[#808080]`}>
    <div className="flex">
      {TABS.map(({ name, width }) =>
        name === "XAGUSD,Daily" ? (
          <button key={name} type="button" aria-current="page" className={`${width} h-[18px] border border-t-0 border-black bg-white leading-4 text-black`}>
            {name}
          </button>
        ) : (
          <button key={name} type="button" className={`${width} flex h-4 items-center justify-center`}>
            <span className="flex-1 text-center leading-4">{name}</span>
            {name !== "USDJPY,H4" && <span className="h-3 w-px bg-[#606060]" />}
          </button>
        )
      )}
    </div>
    <div className="flex gap-2 pr-1">
      <button type="button" aria-label="Прокрутить влево" className="flex h-[18px] w-2 items-center justify-center">
        <svg width="4" height="7" viewBox="0 0 4 7"><path d="M4 0v7L0 3.500z" fill="#808080" /></svg>
      </button>
      <button type="button" aria-label="Прокрутить вправо" className="flex h-[18px] w-2 items-center justify-center">
        <svg width="4" height="7" viewBox="0 0 4 7"><path d="M0 0v7l4-3.500z" fill="#808080" /></svg>
      </button>
    </div>
  </nav>
);

const STATUS = [
  { text: "Default", width: "w-[149px]" },
  { text: "2012.04.13 00:00", width: "w-[131px]" },
  { text: "O: 32.330", width: "w-[89px]" },
  { text: "H: 32.430", width: "w-[88px]" },
  { text: "L: 31.310", width: "w-[86px]" },
  { text: "C: 31.500", width: "w-[86px]" },
  { text: "V: 13355", width: "w-[84px]" },
];

const StatusBar = () => (
  <footer className={`${UI_FONT} flex h-[22px] items-center bg-[#f0f0f0] pt-0.5 text-[11px] text-black`}>
    <span className="flex-1 pl-0.5">Для справки, нажмите F1</span>
    {STATUS.map(({ text, width }) => (
      <span key={text} className={`${width} h-[18px] border-l border-[#a0a0a0] pl-[5px] leading-[18px] whitespace-nowrap`}>
        {text}
      </span>
    ))}
    <span className="flex h-[18px] w-[163px] items-center border-l border-[#a0a0a0] pl-[5px]">
      <svg width="24" height="12" shapeRendering="crispEdges" aria-hidden="true">
        {[10, 9, 8, 7, 6, 5, 4, 3].map((height, i) => (
          <g key={i}>
            <rect x={i * 3} y="0" width="2" height={height - 1} fill="#5a7a00" />
            <rect x={i * 3} y={height} width="2" height={12 - height} fill="#8b1a00" />
          </g>
        ))}
      </svg>
      <span className="pl-[34px]">452/1 kb</span>
      <svg width="14" height="14" viewBox="0 0 14 14" className="mt-1 ml-auto" aria-hidden="true">
        <path d="M0 14L14 0M4 14L14 4M8 14l6-6M12 14l2-2" stroke="#909090" strokeWidth="1.500" />
      </svg>
    </span>
  </footer>
);

const App: React.FC = () => (
  <div className="min-h-screen overflow-hidden bg-black px-[9px] pt-9 pb-2 text-black">
    <MenuBar />
    <Toolbar />
    <ChartWindow />
    <ChartTabs />
    <StatusBar />
  </div>
);

export default App;
